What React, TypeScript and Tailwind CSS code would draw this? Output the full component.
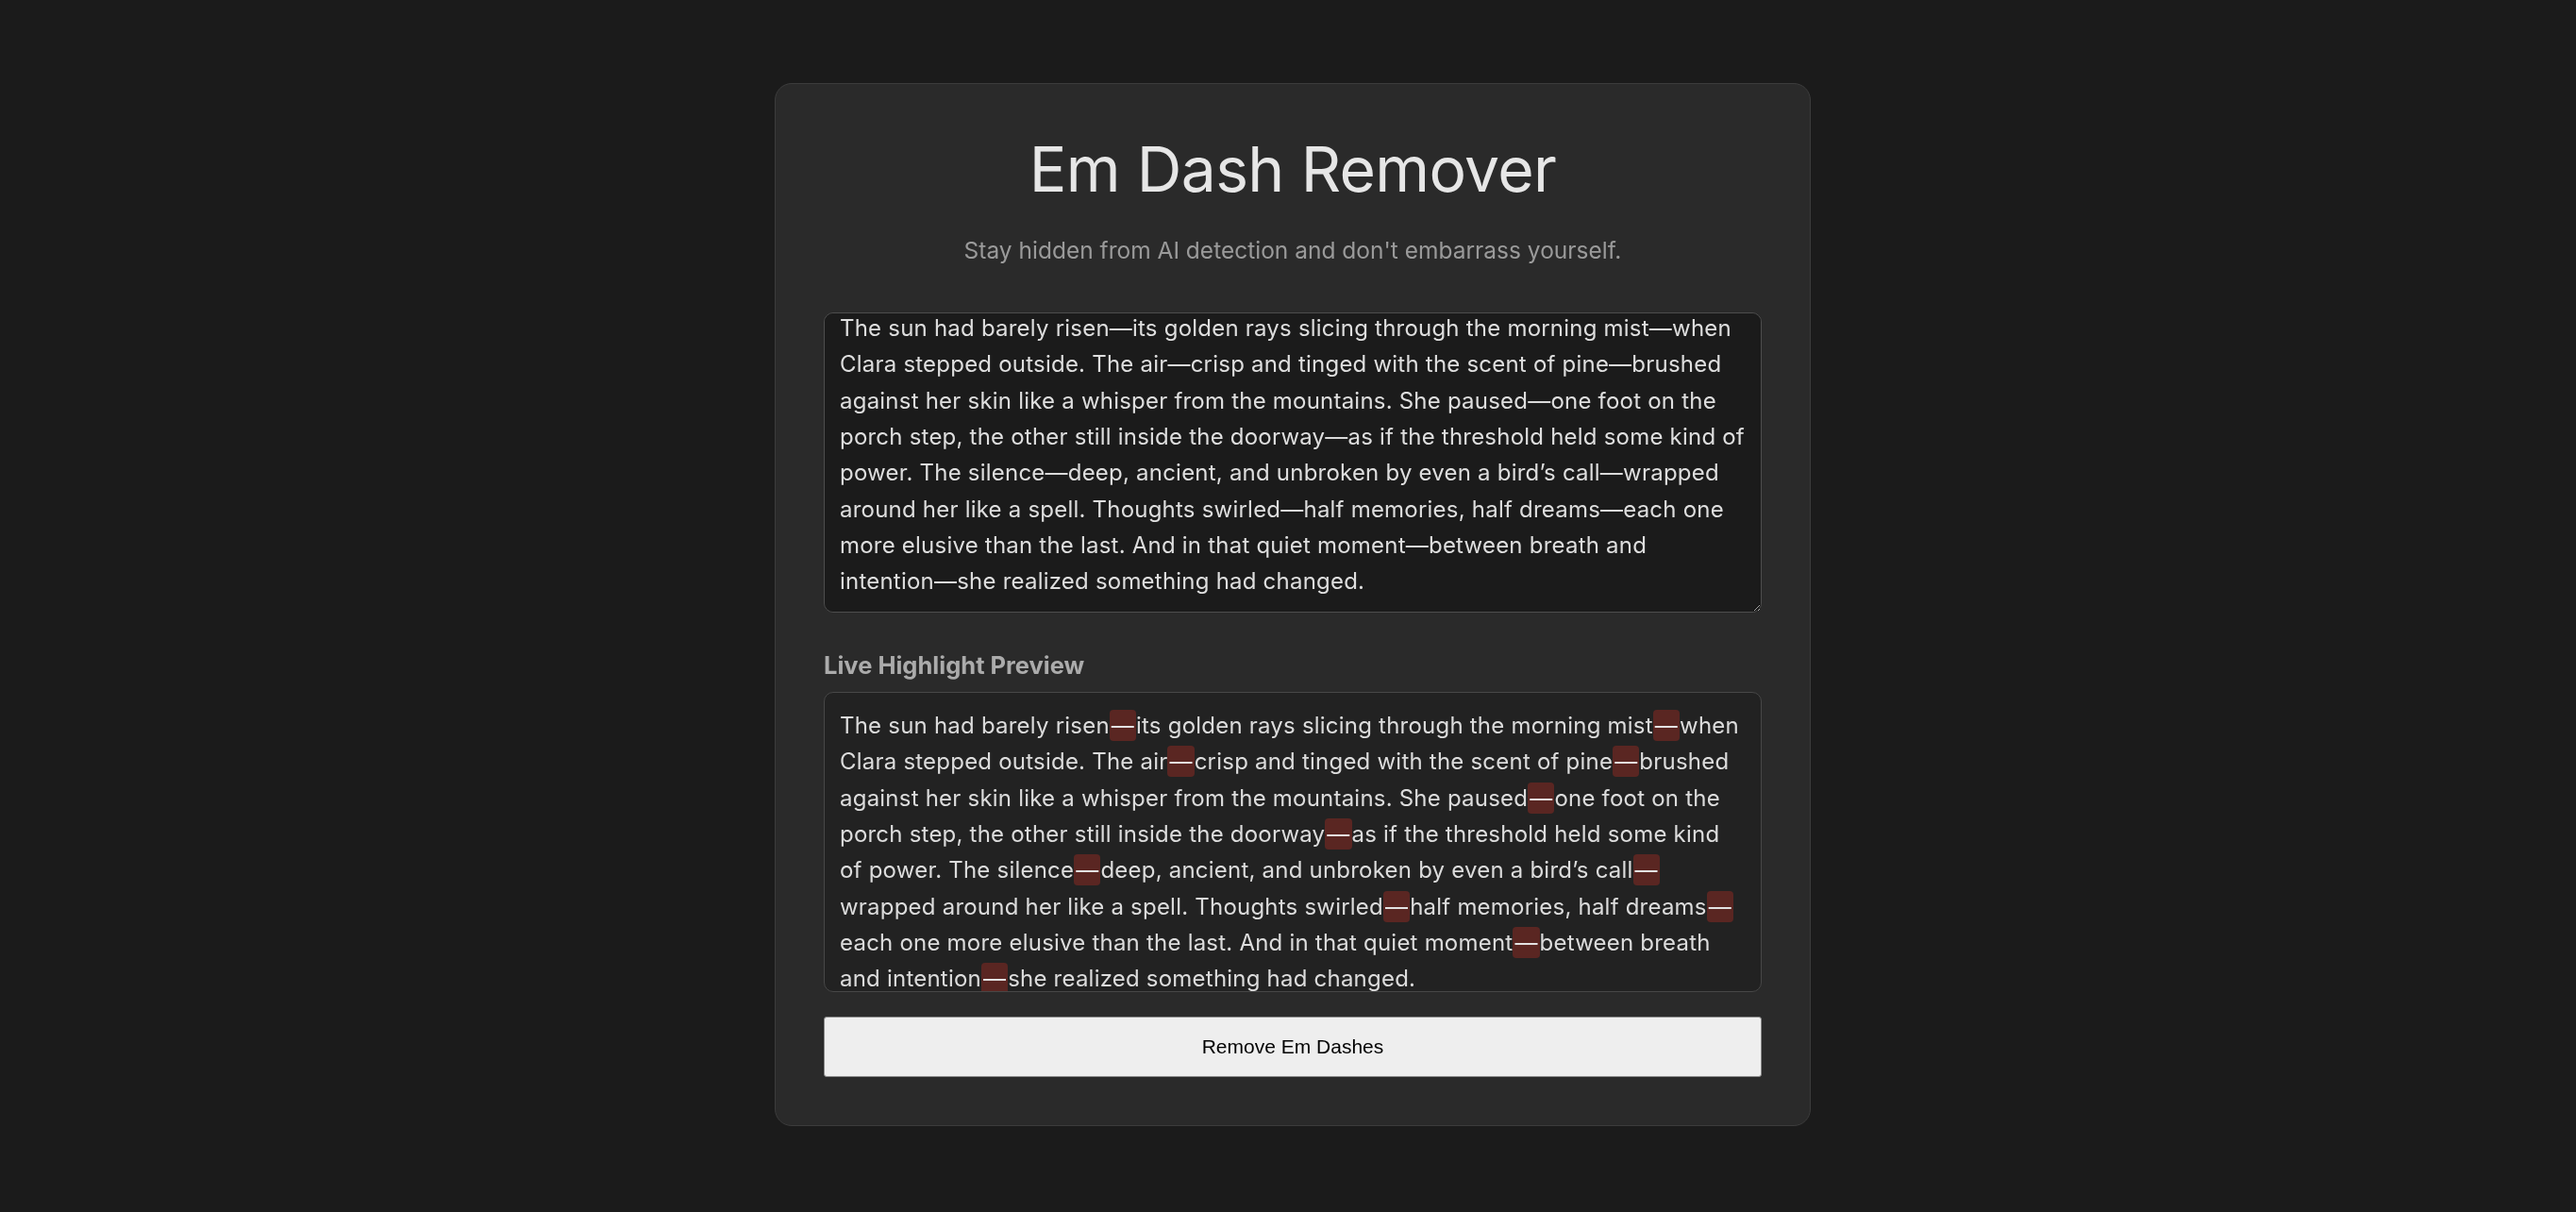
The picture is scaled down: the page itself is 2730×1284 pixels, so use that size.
import { useEffect, useRef, useState } from 'react';

const SAMPLE =
  'The sun had barely risen—its golden rays slicing through the morning mist—when Clara stepped outside. The air—crisp and tinged with the scent of pine—brushed against her skin like a whisper from the mountains. She paused—one foot on the porch step, the other still inside the doorway—as if the threshold held some kind of power. The silence—deep, ancient, and unbroken by even a bird’s call—wrapped around her like a spell. Thoughts swirled—half memories, half dreams—each one more elusive than the last. And in that quiet moment—between breath and intention—she realized something had changed.';

function HighlightPreview({ text }: { text: string }) {
  const parts = text.split('—');
  return (
    <div className="h-[318px] overflow-hidden rounded-[10px] border border-[#474747] bg-[#222222] px-4 py-4 text-[24px] leading-[1.6] tracking-[0.009em] text-[#dcdcdc] whitespace-pre-wrap break-words">
      {parts.map((part, i) => (
        <span key={i}>
          {part}
          {i < parts.length - 1 && (
            <span className="rounded-[4px] bg-[#5a2622] px-[2px] py-[2px] text-[#e6e6e6]">—</span>
          )}
        </span>
      ))}
    </div>
  );
}

export default function App() {
  const [text, setText] = useState(SAMPLE);
  const areaRef = useRef<HTMLTextAreaElement>(null);

  useEffect(() => {
    const el = areaRef.current;
    if (el) el.scrollTop = el.scrollHeight - el.clientHeight - 4;
  }, []);

  return (
    <main className="min-h-screen bg-[#1b1b1b] font-['Inter','Noto_Sans',sans-serif]">
      <div className="flex justify-center pl-[10px] pt-[88px] pb-[91px]">
        <div className="w-[1098px] rounded-[18px] border border-[#3c3c3c] bg-[#2a2a2a] px-[51px] pt-[51px] pb-[51px]">
          <h1 className="mt-[6px] text-center text-[66px] leading-none font-normal tracking-[-0.01em] text-[#e6e6e6]">
            Em Dash Remover
          </h1>
          <p className="mt-[35px] text-center text-[24.5px] leading-[1.5] text-[#9a9a9a]">
            Stay hidden from AI detection and don't embarrass yourself.
          </p>

          <textarea
            ref={areaRef}
            value={text}
            onChange={(e) => setText(e.target.value)}
            className="mt-[47px] block h-[318px] w-full rounded-[10px] border border-[#4d4d4d] bg-[#1b1b1b] px-4 py-4 text-[24px] leading-[1.6] tracking-[0.009em] text-[#dedede] outline-none [scrollbar-width:none]"
          />

          <h2 className="mt-[38px] mb-[9px] text-[25.5px] leading-[1.45] font-bold text-[#ababab]">
            Live Highlight Preview
          </h2>
          <HighlightPreview text={text} />

          <button
            onClick={() => setText(text.replace(/—/g, ', '))}
            className="mt-[26px] block h-[64px] w-full rounded-[3px] border border-[#8a8a8a] bg-[#eeeeee] font-['Liberation_Sans',Arial,sans-serif] text-[21px] text-black"
          >
            Remove Em Dashes
          </button>
        </div>
      </div>
    </main>
  );
}
